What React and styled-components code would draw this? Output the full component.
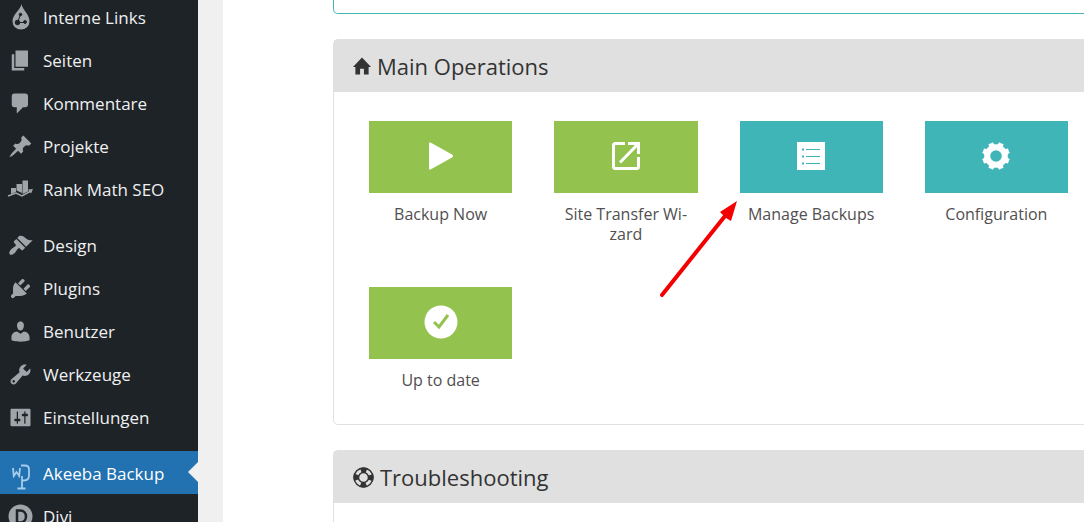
import styled, { createGlobalStyle } from "styled-components";

const GlobalStyle = createGlobalStyle`
  * {
    box-sizing: border-box;
  }
  body {
    margin: 0;
    background: #fff;
    overflow: hidden;
    font-family: "Open Sans", "Noto Sans", sans-serif;
  }
`;

const Page = styled.div`
  display: flex;
  height: 100vh;
  overflow: hidden;
`;

const Sidebar = styled.nav`
  flex: none;
  width: 198px;
  background: #1d2327;
  overflow: hidden;
`;

const Menu = styled.ul`
  list-style: none;
  margin: -5px 0 0;
  padding: 0;
`;

const MenuItem = styled.li`
  margin-top: ${(props) => (props.$spaced ? "13px" : "0")};
`;

const MenuLink = styled.a`
  position: relative;
  display: flex;
  align-items: center;
  gap: 10px;
  height: 43px;
  padding: 2px 0 0 8px;
  font-family: "Open Sans", "Noto Sans", sans-serif;
  font-size: 17px;
  line-height: 24px;
  white-space: nowrap;
  text-decoration: none;
  color: ${(props) => (props.$active ? "#fff" : "#f0f0f1")};
  background: ${(props) => (props.$active ? "#2271b1" : "transparent")};

  svg {
    flex: none;
    width: 25px;
    height: 25px;
    fill: #a0a5aa;
    overflow: visible;
  }
`;

// white notch on the current menu entry
const Notch = styled.span`
  position: absolute;
  right: 0;
  top: 11px;
  border: 10px solid transparent;
  border-left: 0;
  border-right-color: #f0f0f1;
`;

const Content = styled.main`
  flex: 1;
  min-width: 0;
  overflow: hidden;
  background: #fff;
  border-left: 25px solid #f0f0f1;
  padding-left: 110px;
`;

const Notice = styled.div`
  height: 14px;
  margin-right: -20px;
  border: 1px solid #40b5b8;
  border-top: 0;
  border-radius: 0 0 5px 5px;
`;

const Panel = styled.section`
  margin: 25px -20px 0 0;
  border: 1px solid #e0e0e0;
  border-radius: 5px;
`;

const PanelHeader = styled.header`
  display: flex;
  align-items: center;
  gap: 6px;
  height: 52px;
  padding: 0 19px;
  background: #e0e0e0;
  color: #333;

  svg {
    flex: none;
    fill: currentColor;
  }
`;

const PanelTitle = styled.h3`
  margin: 0;
  font-size: 22px;
  font-weight: 400;
  line-height: 30px;
`;

const TileGrid = styled.div`
  display: grid;
  grid-template-columns: repeat(4, 1fr);
  row-gap: 43px;
  padding: 29px 14px 34px;
`;

const Tile = styled.a`
  position: relative;
  display: flex;
  flex-direction: column;
  gap: 11px;
  padding: 0 21px;
  text-align: center;
  text-decoration: none;
  color: #514f50;
`;

const TileIcon = styled.span`
  display: flex;
  align-items: center;
  justify-content: center;
  height: 72px;
  padding-bottom: 2px;
  background: ${(props) => (props.$teal ? "#40b5b8" : "#93c34e")};
  fill: #fff;
`;

const TileLabel = styled.span`
  font-size: 16px;
  line-height: 20px;
`;

const Arrow = styled.svg`
  position: absolute;
  left: -60px;
  top: 78px;
  width: 82px;
  height: 102px;
  pointer-events: none;
`;

const PanelBody = styled.div`
  height: 60px;
`;

const icons = {
  links: (
    <svg viewBox="0 0 25 25">
      <path d="M13.500 -1C12.500 5 4.500 9 4.500 16.500a8.500 8 0 0 0 17 0C21.500 9 14.500 5 13.500 -1z" />
      <g fill="#1d2327" stroke="#1d2327">
        <path d="M9.500 17.500l3-8M9.500 17.500h8" fill="none" strokeWidth="1" />
        <circle cx="12.500" cy="9.500" r="1.300" />
        <circle cx="9.500" cy="17.500" r="2.300" />
        <circle cx="17" cy="17" r="1.400" />
      </g>
    </svg>
  ),
  pages: (
    <svg viewBox="0 0 20 20">
      <path d="M6 15V2h10v13H6zm-1 1h8v2H3V5h2v11z" />
    </svg>
  ),
  comment: (
    <svg viewBox="0 0 20 20">
      <path d="M5 2h9c1.100 0 2 .9 2 2v7c0 1.100-.9 2-2 2h-2l-5 5v-5H5c-1.100 0-2-.9-2-2V4c0-1.100.9-2 2-2z" />
    </svg>
  ),
  pin: (
    <svg viewBox="0 0 20 20">
      <path d="M10.440 3.020l1.820-1.820 6.360 6.350-1.830 1.820c-1.050-.68-2.480-.57-3.410.36l-.75.75c-.92.93-1.040 2.350-.35 3.410l-1.830 1.820-2.410-2.410-2.800 2.790c-.42.42-3.380 2.710-3.800 2.290s1.860-3.390 2.280-3.810l2.790-2.790L4.100 9.360l1.830-1.820c1.050.69 2.480.57 3.400-.36l.75-.75c.93-.92 1.050-2.350.36-3.410z" />
    </svg>
  ),
  rank: (
    <svg viewBox="0 0 25 25">
      <path d="M3 11h5v4l-5 2zM8.500 7H14v9l-5.500-2.500zM14.500 3.500h5.500v11l-5.500 2.500z" />
      <path d="M0 19l8-3 6 3 9-5" fill="none" stroke="#a0a5aa" strokeWidth="1.500" />
      <path d="M20 12.500l5-.5-2 4.500z" />
    </svg>
  ),
  brush: (
    <svg viewBox="0 0 20 20">
      <path d="M14.480 11.060L7.410 3.990l1.500-1.500c.5-.56 2.300-.47 3.510.32 1.210.8 1.430 1.280 2.910 2.100 1.180.64 2.450 1.260 4.450.85zm-.71.71L6.700 4.700 4.930 6.470c-.39.39-.39 1.020 0 1.410l1.060 1.060c.39.39.39 1.030 0 1.420-.6.600-1.430 1.110-2.210 1.690-.35.260-.7.530-1.010.840C1.430 14.230.4 16.080 1.400 17.070c.99 1 2.840-.03 4.180-1.360.31-.31.580-.66.850-1.020.570-.78 1.080-1.610 1.690-2.210.39-.39 1.020-.39 1.410 0l1.060 1.060c.39.39 1.020.39 1.410 0z" />
    </svg>
  ),
  plug: (
    <svg viewBox="0 0 20 20">
      <path d="M13.110 4.360L9.870 7.600 8 5.730l3.240-3.240c.35-.34 1.050-.2 1.560.32.520.51.660 1.210.31 1.550zm-8 1.770l.91-1.120 9.010 9.010-1.190.84c-.71.710-2.630 1.160-3.820 1.160H6.140L4.900 17.260c-.59.59-1.540.59-2.120 0-.59-.58-.59-1.530 0-2.120l1.240-1.240v-3.880c0-1.130.4-3.190 1.090-3.890zm7.260 3.970l3.240-3.240c.34-.35 1.040-.21 1.550.310.520.510.660 1.210.310 1.550l-3.240 3.250z" />
    </svg>
  ),
  user: (
    <svg viewBox="0 0 20 20">
      <path d="M10 9.250c-2.270 0-2.730-3.440-2.730-3.440C7 4.020 7.820 2 9.970 2c2.160 0 2.980 2.020 2.710 3.810 0 0-.41 3.440-2.680 3.440zm0 2.570L12.720 10c2.390 0 4.520 2.330 4.520 4.530v2.490s-3.650 1.130-7.240 1.130c-3.650 0-7.240-1.130-7.240-1.130v-2.490c0-2.250 1.940-4.480 4.470-4.480z" />
    </svg>
  ),
  wrench: (
    <svg viewBox="0 0 20 20">
      <path d="M16.680 9.770c-1.340 1.340-3.300 1.670-4.950.990l-5.410 6.520c-.99.99-2.590.99-3.580 0s-.99-2.590 0-3.570l6.520-5.420c-.68-1.650-.35-3.610.99-4.950 1.280-1.280 3.120-1.620 4.720-1.060l-2.890 2.890 2.820 2.820 2.860-2.870c.53 1.580.180 3.390-1.080 4.650zM3.810 16.210c.4.390 1.040.390 1.430 0 .4-.4.400-1.040 0-1.430-.39-.4-1.030-.4-1.430 0-.39.390-.39 1.030 0 1.430z" />
    </svg>
  ),
  settings: (
    <svg viewBox="0 0 20 20">
      <path d="M18 16V4c0-.55-.45-1-1-1H3c-.55 0-1 .45-1 1v12c0 .55.45 1 1 1h14c.55 0 1-.45 1-1zM8 11h1c.55 0 1 .45 1 1s-.45 1-1 1H8v1.500c0 .28-.22.500-.5.500s-.5-.22-.5-.5V13H6c-.55 0-1-.45-1-1s.45-1 1-1h1V5.500c0-.28.22-.5.500-.5s.5.220.500.500V11zm5-2h-1c-.55 0-1-.45-1-1s.45-1 1-1h1V5.500c0-.28.22-.5.500-.5s.5.220.500.500V7h1c.55 0 1 .45 1 1s-.45 1-1 1h-1v5.500c0 .28-.22.500-.5.500s-.5-.22-.5-.5V9z" />
    </svg>
  ),
  akeeba: (
    <svg viewBox="0 0 25 25">
      <g fill="none" stroke="#a7cdec" strokeWidth="1.800">
        <path d="M5 7l.8 8 2.700-4 2.700 4 .8-8" />
        <path d="M13 4.500h4q4 0 4 4v6q0 5-5 5h-2M14 15v12M9.500 27.500h8" />
      </g>
    </svg>
  ),
  divi: (
    <svg viewBox="0 0 25 25">
      <circle cx="12.500" cy="12.500" r="12" />
      <path d="M9 6.500h3c8 0 8 12 0 12H9z" fill="none" stroke="#1d2327" strokeWidth="2.500" />
    </svg>
  ),
};

const menu = [
  { label: "Interne Links", icon: "links" },
  { label: "Seiten", icon: "pages" },
  { label: "Kommentare", icon: "comment" },
  { label: "Projekte", icon: "pin" },
  { label: "Rank Math SEO", icon: "rank" },
  { label: "Design", icon: "brush", spaced: true },
  { label: "Plugins", icon: "plug" },
  { label: "Benutzer", icon: "user" },
  { label: "Werkzeuge", icon: "wrench" },
  { label: "Einstellungen", icon: "settings" },
  { label: "Akeeba Backup", icon: "akeeba", spaced: true, active: true },
  { label: "Divi", icon: "divi" },
];

const teeth = [22.5, 67.5, 112.5, 157.5, 202.5, 247.5, 292.5, 337.5];

const tiles = [
  {
    label: "Backup Now",
    icon: (
      <svg width="28" height="28" viewBox="0 0 28 28">
        <path d="M2 1.500Q2 0 3.500 .5L25 12.500Q27 14 25 15.500L3.500 27.500Q2 28 2 26.500z" />
      </svg>
    ),
  },
  {
    label: "Site Transfer Wi\u00adzard",
    icon: (
      <svg width="30" height="28" viewBox="0 0 30 28">
        <g fill="none" stroke="#fff" strokeWidth="3">
          <path d="M14 1.500H4.500Q2.500 1.500 2.500 3.500v21q0 2 2 2h21q2 0 2-2V15" />
          <path d="M9 20.500L26 3" />
        </g>
        <path d="M17 0h12v12h-3V5l-3-2h-6z" />
      </svg>
    ),
  },
  {
    label: "Manage Backups",
    teal: true,
    arrow: true,
    icon: (
      <svg width="28" height="28" viewBox="0 0 28 28">
        <path d="M0 0h28v28H0z" />
        <path d="M9 7.500h14M9 14.500h14M9 21.500h14" stroke="#40b5b8" />
        <path d="M5 7.500h2M5 14.500h2M5 21.500h2" stroke="#40b5b8" strokeWidth="2" />
      </svg>
    ),
  },
  {
    label: "Configuration",
    teal: true,
    icon: (
      <svg width="28" height="28" viewBox="0 0 28 28">
        <circle cx="14" cy="14" r="8.800" fill="none" stroke="#fff" strokeWidth="6" />
        {teeth.map((angle) => (
          <path key={angle} d="M10.800 4l.9-4q2.300 .6 4.600 0l.9 4z" transform={`rotate(${angle} 14 14)`} />
        ))}
      </svg>
    ),
  },
  {
    label: "Up to date",
    icon: (
      <svg width="34" height="34" viewBox="0 0 34 34">
        <circle cx="17" cy="17" r="16.500" />
        <path d="M10 17l5 5 9-12" fill="none" stroke="#93c34e" strokeWidth="3" />
      </svg>
    ),
  },
];

function PointerArrow() {
  return (
    <Arrow viewBox="0 0 82 102" aria-hidden="true">
      <path d="M3 96L66 17" stroke="#f40000" strokeWidth="4" strokeLinecap="round" />
      <path d="M78 2L72 22L67 19L61 13z" fill="#f40000" />
    </Arrow>
  );
}

function App() {
  return (
    <Page>
      <GlobalStyle />
      <Sidebar>
        <Menu>
          {menu.map((item) => (
            <MenuItem key={item.label} $spaced={item.spaced}>
              <MenuLink href="#" $active={item.active}>
                {icons[item.icon]}
                {item.label}
                {item.active && <Notch />}
              </MenuLink>
            </MenuItem>
          ))}
        </Menu>
      </Sidebar>
      <Content>
        <Notice />
        <Panel>
          <PanelHeader>
            <svg width="18" height="18" viewBox="0 0 19 18">
              <path d="M9.500 0L19 10h-2.500v8h-5v-6h-4v6h-5v-8H0z" />
            </svg>
            <PanelTitle>Main Operations</PanelTitle>
          </PanelHeader>
          <TileGrid>
            {tiles.map((tile) => (
              <Tile key={tile.label} href="#">
                <TileIcon $teal={tile.teal}>{tile.icon}</TileIcon>
                <TileLabel>{tile.label}</TileLabel>
                {tile.arrow && <PointerArrow />}
              </Tile>
            ))}
          </TileGrid>
        </Panel>
        <Panel>
          <PanelHeader>
            <svg width="21" height="21" viewBox="0 0 21 21">
              <g fill="none" stroke="#333">
                <circle cx="10.500" cy="10.500" r="9.500" strokeWidth="1.500" />
                <circle cx="10.500" cy="10.500" r="5" strokeWidth="1.500" />
                <circle cx="10.500" cy="10.500" r="7.500" strokeWidth="5" strokeDasharray="5.780 6" strokeDashoffset="2.890" />
              </g>
            </svg>
            <PanelTitle>Troubleshooting</PanelTitle>
          </PanelHeader>
          <PanelBody />
        </Panel>
      </Content>
    </Page>
  );
}

export default App;
